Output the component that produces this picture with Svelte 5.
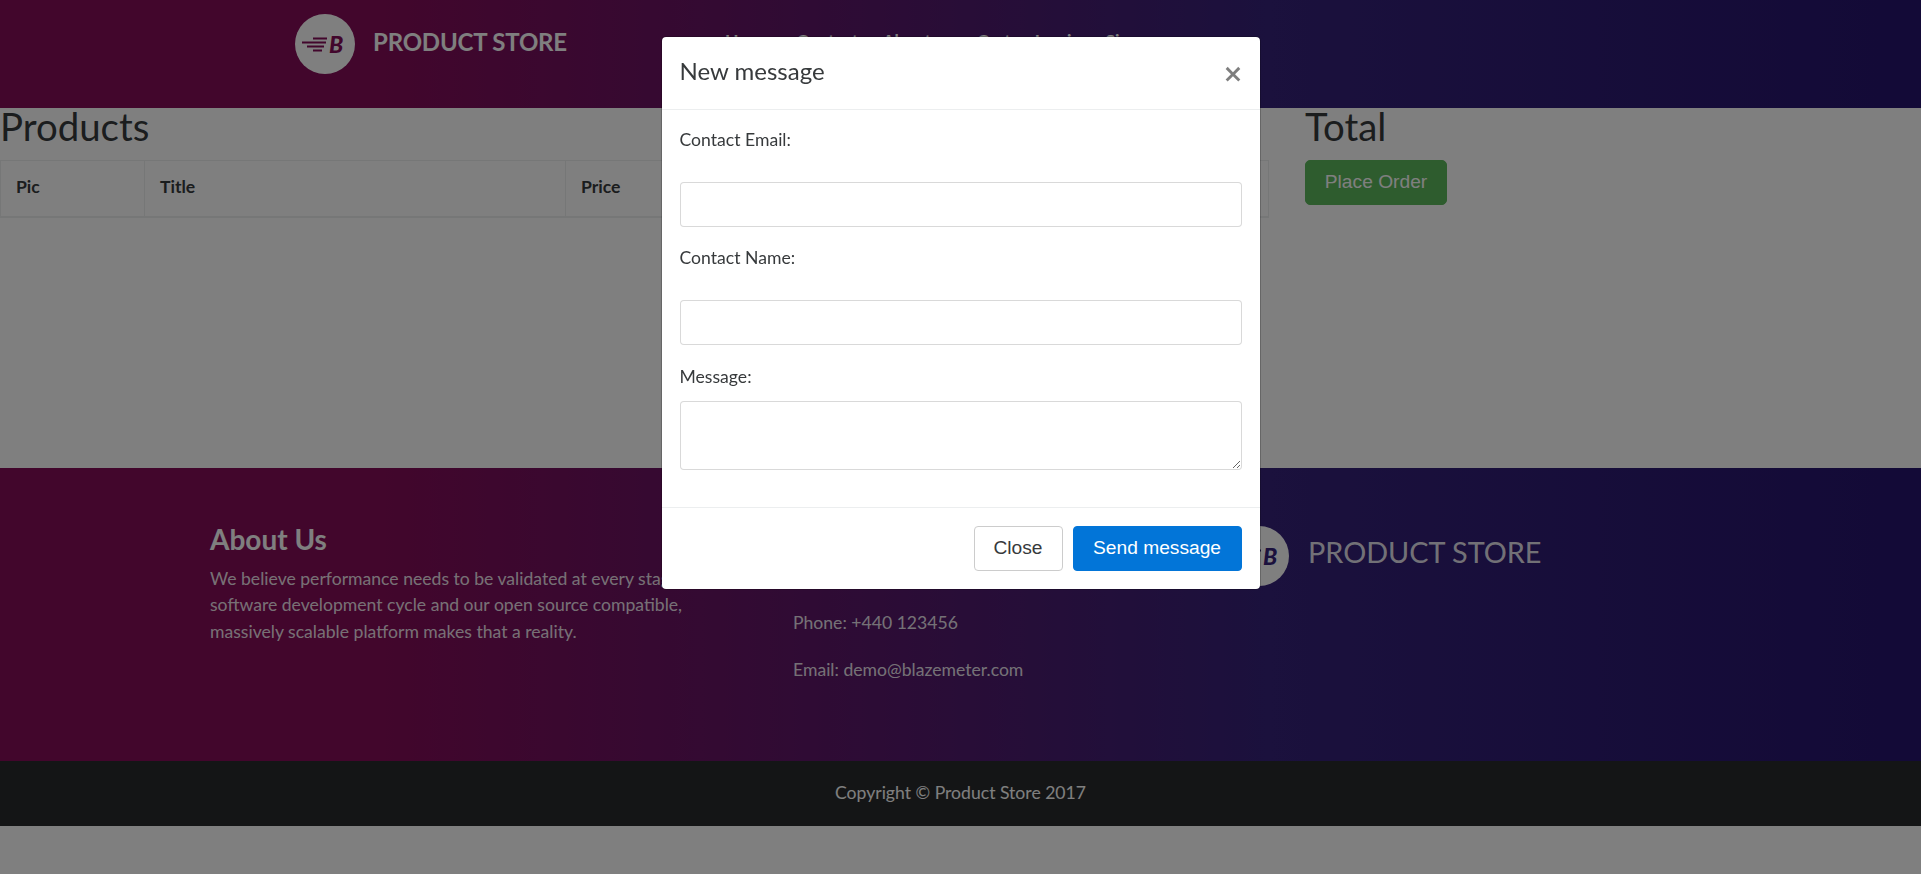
<script>
  const navLinks = ['Home', 'Contact', 'About us', 'Cart', 'Log in', 'Sign up'];
  const columns = ['Pic', 'Title', 'Price', 'x'];
</script>

<div class="page">
  <nav class="navbar">
    <a class="brand">
      <span class="logo">
        <svg viewBox="0 0 60 60" aria-hidden="true">
          <path d="M18 24.5H32M7 28.5H31M12 32.5H29M18 36.5H27" />
        </svg>
        <b>B</b>
      </span>
      PRODUCT STORE
    </a>
    <ul class="nav-links">
      {#each navLinks as link}
        <li>{link}</li>
      {/each}
    </ul>
  </nav>

  <main class="cart">
    <section class="products">
      <h2>Products</h2>
      <table>
        <thead>
          <tr>
            {#each columns as col}
              <th>{col}</th>
            {/each}
          </tr>
        </thead>
      </table>
    </section>
    <section class="total">
      <h2>Total</h2>
      <button class="order">Place Order</button>
    </section>
  </main>

  <footer class="site-footer">
    <div class="about">
      <h4>About Us</h4>
      <p>We believe performance needs to be validated at every stage of the software development cycle and our open source compatible, massively scalable platform makes that a reality.</p>
    </div>
    <div class="touch">
      <h4>Get in Touch</h4>
      <p>Address: 2390 El Camino Real</p>
      <p>Phone: +440 123456</p>
      <p>Email: demo@blazemeter.com</p>
    </div>
    <div class="foot-brand">
      <span class="logo blue">
        <svg viewBox="0 0 60 60" aria-hidden="true">
          <path d="M18 24.5H32M7 28.5H31M12 32.5H29M18 36.5H27" />
        </svg>
        <b>B</b>
      </span>
      <span class="foot-name">PRODUCT STORE</span>
    </div>
  </footer>

  <div class="copyright">Copyright © Product Store 2017</div>
</div>

<div class="backdrop">
  <div class="modal">
    <header class="modal-head">
      <h5>New message</h5>
      <button class="close">×</button>
    </header>
    <form class="modal-body">
      <label for="c-email">Contact Email:</label>
      <input id="c-email" type="text" />
      <label for="c-name">Contact Name:</label>
      <input id="c-name" type="text" />
      <label class="tight" for="c-msg">Message:</label>
      <textarea id="c-msg"></textarea>
    </form>
    <footer class="modal-foot">
      <button class="btn plain">Close</button>
      <button class="btn primary">Send message</button>
    </footer>
  </div>
</div>

<style>
  :global(body) {
    font-family: Lato, "Open Sans", sans-serif;
    background: #fff;
    color: #373a3c;
    font-size: 17.6px;
    line-height: 1.5;
  }

  .page { min-height: 874px; }

  /* Top bar */
  .navbar {
    height: 108px;
    box-sizing: border-box;
    padding-left: 295px;
    display: flex;
    align-items: flex-start;
    background: linear-gradient(90deg, #840c58 0%, #840c58 20%, #36227a 66%, #26146e 100%);
    color: #fff;
  }

  .brand {
    display: flex;
    align-items: flex-start;
    gap: 18px;
    padding-top: 14px;
    font-size: 24px;
    font-weight: 700;
    letter-spacing: -0.2px;
    line-height: 56px;
    width: 430px;
    height: 74px;
  }

  .logo {
    flex: none;
    width: 60px;
    height: 60px;
    box-sizing: border-box;
    padding-left: 34px;
    border-radius: 50%;
    background: #fff;
    color: #840c58;
    display: flex;
    align-items: center;
    position: relative;
  }
  .logo svg {
    position: absolute;
    inset: 0;
    fill: none;
    stroke: currentColor;
    stroke-width: 2;
  }
  .logo b {
    font-size: 23px;
    font-style: italic;
    font-weight: 900;
    line-height: 1;
  }
  .logo.blue { color: #36227a; }

  .nav-links {
    list-style: none;
    margin: 0;
    padding: 28px 0 0;
    display: flex;
    gap: 24px;
    font-size: 17.6px;
    font-weight: 700;
    line-height: 26px;
  }

  /* Cart */
  .cart {
    height: 360px;
    display: flex;
    gap: 36px;
  }
  .products { width: 1269px; }
  .total { flex: 1; }

  h2 {
    margin: 0;
    font-size: 38.4px;
    font-weight: 400;
    line-height: 37px;
    height: 52px;
  }

  table {
    width: 100%;
    border-collapse: collapse;
    table-layout: fixed;
  }
  th {
    height: 56px;
    box-sizing: border-box;
    padding: 0 15px 3px;
    border: 1px solid #eceeef;
    border-bottom-width: 2px;
    text-align: left;
    font-size: 17.6px;
    font-weight: 700;
  }
  th:nth-child(1) { width: 144px; }
  th:nth-child(2) { width: 421px; }
  th:nth-child(3) { width: 352px; }

  .order {
    width: 142px;
    height: 45px;
    border: 1px solid #5cb85c;
    border-radius: 5px;
    background: #5cb85c;
    color: #fff;
    font-family: "Liberation Sans", Arial, sans-serif;
    font-size: 19.2px;
    padding: 0 0 2px;
  }

  /* Footer */
  .site-footer {
    height: 293px;
    box-sizing: border-box;
    padding: 54px 0 0 210px;
    display: grid;
    grid-template-columns: 583px 436px 1fr;
    background: linear-gradient(90deg, #840c58 0%, #840c58 20%, #36227a 66%, #26146e 100%);
    color: #fff;
  }
  h4 {
    margin: 1px 0 9px;
    font-size: 28px;
    font-weight: 700;
    line-height: 33.6px;
  }
  .about p {
    margin: 0;
    width: 530px;
    line-height: 26.8px;
    color: rgba(255, 255, 255, 0.9);
  }
  .touch h4 { margin-bottom: 7.5px; }
  .touch p {
    margin: 0 0 20px;
    color: rgba(255, 255, 255, 0.9);
  }

  .foot-brand {
    display: flex;
    align-items: flex-start;
    gap: 19px;
    margin-top: 4px;
  }
  .foot-name {
    font-size: 28.8px;
    line-height: 52px;
    color: rgba(255, 255, 255, 0.9);
  }

  .copyright {
    height: 65px;
    background: #292b2c;
    color: #fff;
    display: flex;
    align-items: center;
    justify-content: center;
  }

  /* Modal over the page */
  .backdrop {
    position: fixed;
    inset: 0;
    background: rgba(0, 0, 0, 0.5);
  }
  .modal {
    width: 600px;
    height: 554px;
    box-sizing: border-box;
    margin: 36px auto 0;
    background: #fff;
    border: 1px solid rgba(0, 0, 0, 0.2);
    border-radius: 5px;
    background-clip: padding-box;
    display: flex;
    flex-direction: column;
  }
  .modal-head {
    height: 73px;
    box-sizing: border-box;
    padding: 0 16px 5px 18px;
    display: flex;
    align-items: center;
    justify-content: space-between;
    border-bottom: 1px solid #eceeef;
  }
  h5 {
    margin: 0;
    font-size: 24px;
    font-weight: 400;
  }
  .close {
    border: 0;
    padding: 0;
    background: none;
    color: #000;
    opacity: 0.5;
    font-family: "DejaVu Sans", sans-serif;
    font-size: 25px;
    font-weight: 700;
    line-height: 1;
    margin-top: 5px;
  }

  .modal-body {
    flex: 1;
    box-sizing: border-box;
    padding: 17px 18px 0;
    display: flex;
    flex-direction: column;
  }
  label { display: block; height: 26px; margin-bottom: 29px; }
  label.tight { margin: 1px 0 11px; }

  input, textarea {
    display: block;
    width: 100%;
    box-sizing: border-box;
    border: 1px solid rgba(0, 0, 0, 0.15);
    border-radius: 4px;
    background: #fff;
    flex: none;
  }
  input { height: 45px; margin-bottom: 18px; }
  textarea { height: 69px; }

  .modal-foot {
    height: 82px;
    box-sizing: border-box;
    padding: 18px 18px 0 0;
    border-top: 1px solid #eceeef;
    display: flex;
    align-items: flex-start;
    justify-content: flex-end;
    gap: 10px;
  }
  .btn {
    height: 45px;
    border-radius: 4px;
    font-family: "Liberation Sans", Arial, sans-serif;
    font-size: 19.2px;
    padding: 0 0 2px;
  }
  .plain {
    width: 89px;
    border: 1px solid #ccc;
    background: #fff;
    color: #373a3c;
  }
  .primary {
    width: 169px;
    border: 1px solid #0275d8;
    background: #0275d8;
    color: #fff;
  }
</style>
